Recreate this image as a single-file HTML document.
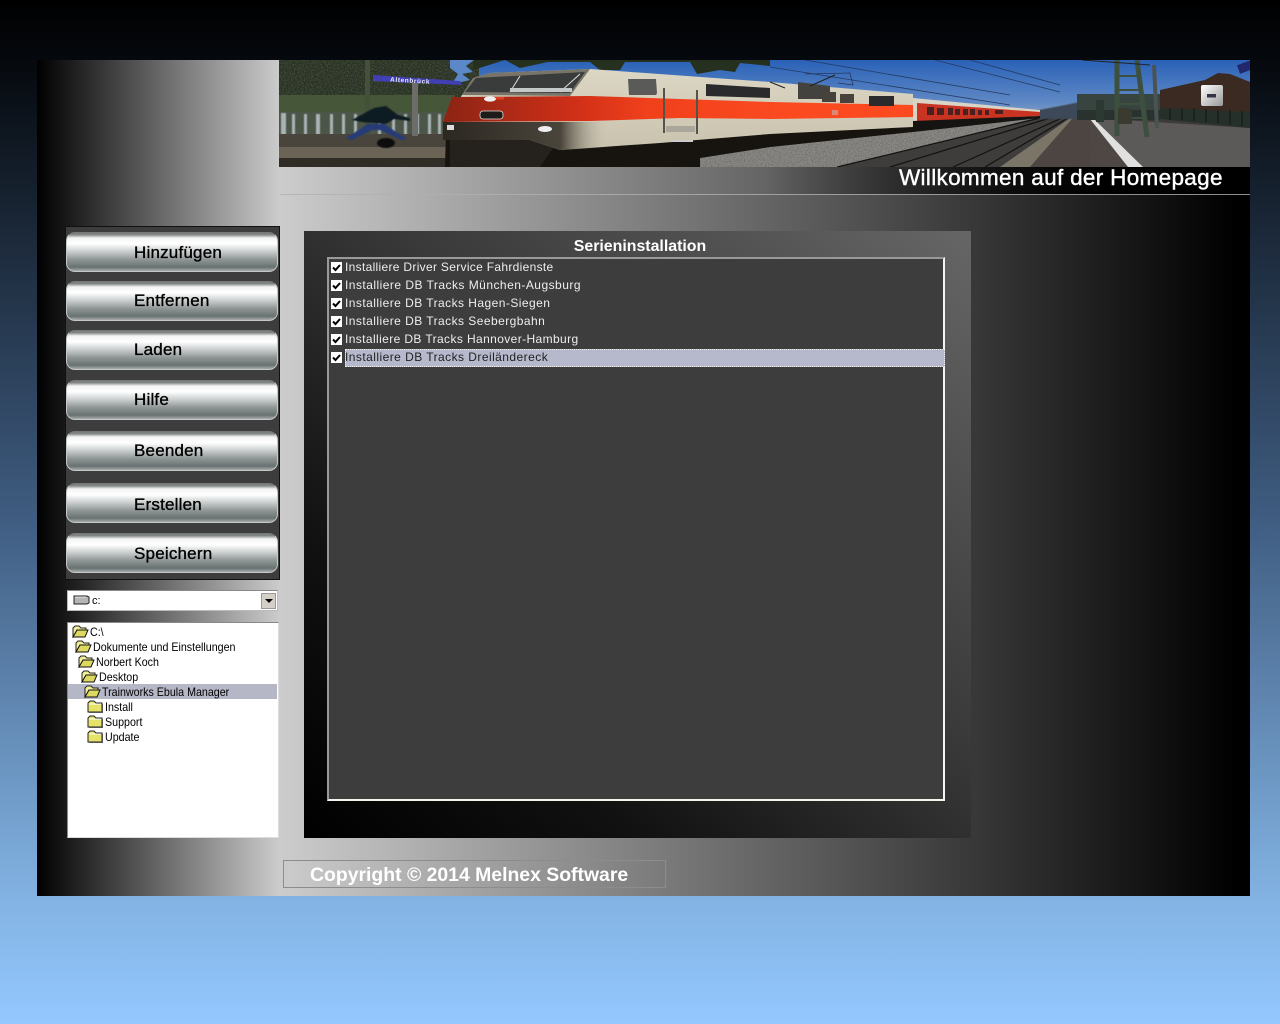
<!DOCTYPE html>
<html lang="de"><head><meta charset="utf-8"><title>Trainworks Ebula Manager</title>
<style>
html,body{margin:0;padding:0;width:1280px;height:1024px;overflow:hidden}
body{position:relative;background:linear-gradient(180deg,#000 0,#04070b 50px,#3e5b7f 512px,#82b2e2 896px,#94c8ff 1024px);font-family:"Liberation Sans",sans-serif}
.a{position:absolute}
#panel{left:37px;top:60px;width:1213px;height:836px;background:linear-gradient(90deg,#000 0,#ccc 243px,#000 1200px)}
#banner{left:0;top:0}
.btn{position:absolute;left:66px;width:212px;height:40px;box-sizing:border-box;border-radius:9px;border:1px solid #c4c8c8;border-top-color:#777;
background:linear-gradient(180deg,#7c8080 0,#7c8080 4%,#f4f4f4 13%,#fff 28%,#ccd0d0 48%,#8f9595 70%,#687272 90%,#a8acac 100%);color:#000;font-size:17px;line-height:37px;letter-spacing:.2px;-webkit-text-stroke:.35px #000}
.btn span{position:absolute;white-space:nowrap}
#side{left:65px;top:226px;width:215px;height:354px;box-sizing:border-box;background:#3d3d3d;border:1px solid #111}
#combo{left:67px;top:590px;width:211px;height:21px;box-sizing:border-box;background:#fff;border:1px solid #bbb;border-top-color:#888;font-size:11px;line-height:21px}
#arrow{position:absolute;right:1px;top:2px;width:15px;height:16px;background:#d4d0c8;border:1px solid #999;box-sizing:border-box}
#arrow:after{content:"";position:absolute;left:3px;top:5px;border:4px solid transparent;border-top:4px solid #000}
#tree{left:67px;top:622px;width:212px;height:216px;box-sizing:border-box;background:#fff;border:1px solid #ddd;border-top-color:#888;border-left-color:#888;font-size:12px;color:#000}
.r{position:absolute;left:0;right:1px;height:15px;line-height:16px;white-space:nowrap}
.r span{position:absolute;top:0;transform:scaleX(.89);transform-origin:0 50%}
.r svg{position:absolute;top:1px}
#main{left:304px;top:231px;width:667px;height:607px;background:linear-gradient(to top right,#000 0,#111 25%,#3a3a3a 58%,#666 100%)}
#ttl{left:304px;top:237px;width:672px;text-align:center;color:#fff;font-weight:bold;font-size:15.9px;line-height:19px}
#list{left:327px;top:257px;width:618px;height:544px;box-sizing:border-box;background:#3d3d3d;border:2px solid #fff;border-top-color:#999;border-left-color:#999;border-right-color:#f4f4f0;border-bottom-color:#f4f4ec}
.i{position:absolute;left:0;width:616px;height:18px;font-size:12px;line-height:16px;color:#eee;white-space:nowrap}
.i b{font-weight:normal;position:absolute;left:16px;top:0;right:0;height:18px}
.i.s b{background:#b6b9cc;color:#222;outline:1px dotted #eee;outline-offset:-1px}
.c{position:absolute;left:2px;top:3px;width:11px;height:11px;background:#fff}
.c svg{position:absolute;left:0;top:0}
#foot{left:283px;top:860px;width:383px;height:28px;box-sizing:border-box;border:1px solid #8c8c8c}
#foottxt{left:310px;top:863px;color:#fff;font-weight:bold;font-size:19.4px;line-height:25px;white-space:nowrap}
#wel{left:899px;top:165px;color:#fff;font-size:22.5px;line-height:26px;white-space:nowrap;-webkit-text-stroke:.4px #fff;letter-spacing:.32px}
</style></head><body>
<div class="a" id="panel"></div>

<svg class="a" id="banner" width="1280" height="200" viewBox="0 0 1280 200">
<defs>
<linearGradient id="sky" gradientUnits="userSpaceOnUse" x1="0" y1="60" x2="0" y2="120"><stop offset="0" stop-color="#2a62b8"/><stop offset=".7" stop-color="#5f88c4"/><stop offset="1" stop-color="#8fa7c8"/></linearGradient>
<linearGradient id="cream" x1="0" y1="0" x2="0" y2="1"><stop offset="0" stop-color="#dcd6c4"/><stop offset="1" stop-color="#c8c2ae"/></linearGradient>
<linearGradient id="nose" gradientUnits="userSpaceOnUse" x1="445" y1="0" x2="610" y2="0"><stop offset="0" stop-color="#2c2822"/><stop offset=".7" stop-color="#4a453b"/><stop offset="1" stop-color="#cfc9b6" stop-opacity="0"/></linearGradient>
<linearGradient id="red" gradientUnits="userSpaceOnUse" x1="445" y1="0" x2="780" y2="0"><stop offset="0" stop-color="#8c2414"/><stop offset=".4" stop-color="#d23018"/><stop offset=".6" stop-color="#f0401c"/><stop offset="1" stop-color="#fb4a20"/></linearGradient>
<linearGradient id="btng" x1="0" y1="0" x2="1" y2="1"><stop offset="0" stop-color="#fff"/><stop offset="1" stop-color="#999"/></linearGradient>
<linearGradient id="strip" gradientUnits="userSpaceOnUse" x1="279" y1="0" x2="1250" y2="0"><stop offset=".5" stop-color="#000" stop-opacity="0"/><stop offset=".85" stop-color="#000"/></linearGradient>
<filter id="b1"><feGaussianBlur stdDeviation=".5"/></filter>
<filter id="n" x="0" y="0" width="100%" height="100%"><feTurbulence type="fractalNoise" baseFrequency=".7" numOctaves="2" seed="3"/><feColorMatrix values="0 0 0 0 .1 0 0 0 0 .1 0 0 0 0 .1 1.6 0 0 0 -.6"/></filter>
<clipPath id="bc"><rect x="279" y="60" width="971" height="107"/></clipPath>
</defs>
<g clip-path="url(#bc)">
<rect x="279" y="60" width="971" height="107" fill="url(#sky)"/>
<!-- trees -->
<rect x="279" y="60" width="200" height="40" fill="#27321f"/>
<rect x="279" y="60" width="200" height="40" filter="url(#n)"/>
<path d="M473 60H770V66L740 63 735 72 720 70 697 74 690 62 625 62 620 70H600L590 62 548 62 520 68 505 60 473 70Z" fill="#26301f"/>
<path d="M450 60H474L466 66 473 72 462 74 470 80 452 84 458 74 450 68Z" fill="#5a88c8"/>
<path d="M279 95H455V118H279Z" fill="#465638"/>
<!-- fence -->
<rect x="279" y="112" width="175" height="24" fill="#4c5648"/>
<g fill="#a9b2b4" filter="url(#b1)"><rect x="281" y="113" width="5" height="22"/><rect x="292" y="114" width="3" height="21"/><rect x="304" y="114" width="3" height="21"/><rect x="316" y="114" width="4" height="21"/><rect x="330" y="114" width="3" height="21"/><rect x="342" y="114" width="3" height="21"/><rect x="354" y="114" width="3" height="21"/><rect x="366" y="114" width="3" height="21"/><rect x="378" y="114" width="3" height="21"/><rect x="392" y="114" width="3" height="21"/><rect x="404" y="114" width="3" height="21"/><rect x="416" y="114" width="3" height="21"/><rect x="428" y="114" width="3" height="21"/><rect x="438" y="114" width="3" height="21"/></g>
<rect x="279" y="134" width="180" height="33" fill="#4a453c"/>
<rect x="279" y="147" width="170" height="11" fill="#6a6356"/>
<rect x="279" y="158" width="170" height="9" fill="#302c26"/>
<!-- sign -->
<rect x="412" y="78" width="6" height="58" fill="#6c6c68"/>
<rect x="365" y="60" width="5" height="75" fill="#45503a"/>
<path d="M373 75 460 81 462 85 373 81Z" fill="#4040b4"/>
<text x="390" y="81.5" font-size="6.5" letter-spacing=".6" fill="#e8e8f0" font-weight="bold" font-family="Liberation Sans" transform="rotate(3.5 390 82)">Altenbrück</text>
<!-- person -->
<g filter="url(#b1)"><path d="M352 120 374 108 386 106 398 115 410 118V121L394 119 386 124 362 122Z" fill="#101a24"/><path d="M346 138 368 124 384 124 407 139 402 140 380 130 372 130 352 140Z" fill="#263a78"/><ellipse cx="386" cy="143" rx="9" ry="5" fill="#111"/></g>
<!-- ground base -->
<rect x="560" y="118" width="690" height="49" fill="#3a3836"/>
<!-- ballast -->
<path d="M700 158 770 147 910 132 1037 118 837 167H700Z" fill="#8a8985"/>
<path d="M700 158 770 147 910 132 1037 118 837 167H700Z" filter="url(#n)" opacity=".85"/>
<!-- tracks -->
<path d="M837 167 1037 118 1070 118 1000 167Z" fill="#3f3d3b"/>
<g stroke="#141210" stroke-width="1.2" fill="none"><path d="M837 167 1040 118"/><path d="M890 167 1050 118"/><path d="M953 167 1062 118"/><path d="M985 167 1068 118"/></g>
<path d="M1000 167 1070 118 1073 118 1030 167Z" fill="#7a7567"/>
<!-- platform -->
<path d="M1030 167 1073 118 1090 118 1142 167Z" fill="#4d4542"/>
<path d="M1090 118 1250 128V167H1142Z" fill="#5d5a58"/>
<path d="M1090 118 1250 128V167H1142Z" filter="url(#n)" opacity=".5"/>
<path d="M1090 119 1095 120 1143 167H1128Z" fill="#e0e0de"/>
<!-- distant hills / station -->
<path d="M1028 112 1060 106 1090 100 1100 112 1090 119H1040Z" fill="#3e4a58" filter="url(#b1)"/>
<path d="M1077 94H1160V120H1077Z" fill="#38443f"/>
<path d="M1077 110H1160V120H1077Z" fill="#2a3230"/>
<!-- building -->
<path d="M1160 90 1205 80 1218 73 1230 74 1250 82V128L1160 119Z" fill="#3a2a22"/>
<path d="M1160 108 1250 112V128L1160 119Z" fill="#26302a"/>
<g stroke="#181a16" stroke-width="1.2"><path d="M1170 108V120M1182 108V120M1194 108V121M1206 109V122M1218 110V123M1230 110V125M1242 111V126"/></g>
<rect x="1238" y="63" width="14" height="9" fill="#22266a" transform="rotate(-20 1244 67)"/>
<!-- gantry -->
<g fill="none" stroke="#3d5040"><path d="M1117 60V136" stroke-width="5"/><path d="M1137 60 1147 137" stroke-width="5"/><path d="M1117 76H1140M1117 90H1143M1117 104H1144M1117 118H1145" stroke-width="2"/></g>
<path d="M1154 65 1157 128" stroke="#4a5252" stroke-width="4" fill="none"/>
<path d="M1082 60 1150 65" stroke="#222" stroke-width="1" fill="none"/>
<path d="M1118 108H1132V124H1118Z" fill="#3a3a30"/>
<rect x="1096" y="100" width="8" height="22" fill="#2c3832"/>
<!-- catenary -->
<g stroke="#243a60" stroke-width=".8" fill="none"><path d="M770 67 1010 105"/><path d="M805 60 1010 95"/><path d="M935 60 1060 92"/><path d="M970 60 1060 85"/><path d="M805 74 850 73 853 85 838 83"/></g>
<!-- coaches -->
<path d="M913 98 1040 110V116L913 130Z" fill="#d8d4c6"/>
<path d="M917 103 1040 112V116L917 122Z" fill="#c93322"/>
<path d="M913 121 1040 116V118L913 132Z" fill="#161412"/>
<g fill="#4a2020"><rect x="927" y="107" width="7" height="8"/><rect x="937" y="108" width="7" height="7"/><rect x="948" y="108" width="5" height="7"/><rect x="955" y="109" width="5" height="6"/><rect x="963" y="109" width="5" height="6"/><rect x="970" y="109" width="5" height="6"/><rect x="978" y="110" width="4" height="5"/><rect x="985" y="110" width="4" height="5"/><rect x="995" y="110" width="8" height="4"/></g>
<!-- loco undercarriage -->
<path d="M446 130 560 130 770 128 913 124V132L770 147 700 158 700 167H445Z" fill="#17140f"/>
<path d="M450 140 560 138 540 167H450Z" fill="#25221e"/>
<!-- loco body -->
<path d="M462 95 473 78 490 73 590 69 770 82 913 94V127L770 134 660 143 560 150 530 140H443L447 122Z" fill="url(#cream)"/>
<path d="M443 122 610 122 610 147 560 150 530 140H443Z" fill="url(#nose)"/>
<path d="M452 97 590 96 770 102 913 105V117L770 119 680 118 590 121 443 122Z" fill="url(#red)"/>
<path d="M462 95 473 78 490 73 590 69 570 96Z" fill="#787468"/>
<path d="M465 92 476 78 585 72 570 93Z" fill="#3a3c3c"/>
<path d="M510 92 520 76M560 92 580 74" stroke="#ddd" stroke-width="1"/>
<rect x="510" y="88" width="62" height="4" fill="#c4c8c8"/>
<path d="M628 79h28l1 14-1 2h-27z" fill="#5a5a58"/>
<path d="M706 84 770 88 770 98 706 96Z" fill="#2a2a2c"/>
<path d="M798 82 830 86V99H798Z" fill="#44423e"/>
<path d="M822 92h14v10h-14zM840 94h14v9h-14z" fill="#48423c"/>
<path d="M869 96h25v10h-25z" fill="#2a2a2c"/>
<g stroke="#55524a" stroke-width="2" fill="none"><path d="M664 88V133"/><path d="M697 90V134"/></g>
<path d="M666 126H695V132H666Z" fill="#aaa79a"/>
<rect x="671" y="140" width="22" height="2" fill="#ccc"/>
<rect x="480" y="111" width="23" height="8" rx="3" fill="#1e1c18" stroke="#ddd" stroke-width=".8"/>
<ellipse cx="490" cy="99" rx="6" ry="2.6" fill="#eee"/>
<rect x="496" y="97" width="8" height="2.5" fill="#e04020"/>
<ellipse cx="545" cy="129" rx="7" ry="3" fill="#eee"/>
<rect x="447" y="125" width="7" height="5" fill="#ddd"/>
<rect x="832" y="110" width="6" height="5" fill="#d98a76"/>
<!-- panto -->
<path d="M785 88 770 82M810 86 835 75" stroke="#222" stroke-width="1"/>
<!-- white cube -->
<rect x="1201" y="85" width="22" height="21" rx="2" fill="url(#btng)"/>
<rect x="1207" y="94" width="9" height="3.5" fill="#334"/>
</g>
<rect x="279" y="167" width="971" height="27" fill="url(#strip)"/>
<rect x="280" y="194" width="970" height="1" fill="#b0b0b0" opacity=".8"/>
</svg>
<div class="a" id="wel">Willkommen auf der Homepage</div>

<div class="a" id="side"></div>
<div class="btn" style="top:232px"><span style="left:67px;top:1px">Hinzufügen</span></div>
<div class="btn" style="top:281px"><span style="left:67px;top:0">Entfernen</span></div>
<div class="btn" style="top:330px"><span style="left:67px;top:0">Laden</span></div>
<div class="btn" style="top:380px"><span style="left:67px;top:0">Hilfe</span></div>
<div class="btn" style="top:431px"><span style="left:67px;top:0">Beenden</span></div>
<div class="btn" style="top:483px"><span style="left:67px;top:2px">Erstellen</span></div>
<div class="btn" style="top:533px"><span style="left:67px;top:1px">Speichern</span></div>

<div class="a" id="combo">
<svg style="position:absolute;left:5px;top:3px" width="17" height="11"><path d="M1 2h13l2 1v6l-2 1H1z" fill="#b5b5b5" stroke="#222"/><path d="M2 3h11" stroke="#eee"/></svg>
<span style="position:absolute;left:24px;top:0">c:</span><div id="arrow"></div></div>

<svg width="0" height="0" style="position:absolute"><defs>
<symbol id="fo" viewBox="0 0 17 13"><path d="M1 3 3 1H7L9 3H14V5H5L1 12Z" fill="#f2ef9a" stroke="#222"/><path d="M1 12 5 5H16L13 12Z" fill="#dcd860" stroke="#111"/></symbol>
<symbol id="fc" viewBox="0 0 17 13"><path d="M1 3 3 1H7L9 3H15V12H1Z" fill="#e6e36a" stroke="#222"/><path d="M2 4H14" stroke="#fff"/><path d="M15.5 4V12.5H2" stroke="#555" fill="none"/></symbol>
</defs></svg>
<div class="a" id="tree">
<div class="r" style="top:1px"><svg style="left:4px" width="17" height="13"><use href="#fo"/></svg><span style="left:22px">C:\</span></div>
<div class="r" style="top:16px"><svg style="left:7px" width="17" height="13"><use href="#fo"/></svg><span style="left:25px">Dokumente und Einstellungen</span></div>
<div class="r" style="top:31px"><svg style="left:10px" width="17" height="13"><use href="#fo"/></svg><span style="left:28px">Norbert Koch</span></div>
<div class="r" style="top:46px"><svg style="left:13px" width="17" height="13"><use href="#fo"/></svg><span style="left:31px">Desktop</span></div>
<div class="r" style="top:61px;background:#b5b6c6"><svg style="left:16px" width="17" height="13"><use href="#fo"/></svg><span style="left:34px">Trainworks Ebula Manager</span></div>
<div class="r" style="top:76px"><svg style="left:19px" width="17" height="13"><use href="#fc"/></svg><span style="left:37px">Install</span></div>
<div class="r" style="top:91px"><svg style="left:19px" width="17" height="13"><use href="#fc"/></svg><span style="left:37px">Support</span></div>
<div class="r" style="top:106px"><svg style="left:19px" width="17" height="13"><use href="#fc"/></svg><span style="left:37px">Update</span></div>
</div>

<div class="a" id="main"></div>
<div class="a" id="ttl">Serieninstallation</div>
<div class="a" id="list">
<div class="i" style="top:0;letter-spacing:.31px"><div class="c"><svg width="11" height="11"><path d="M2 5.5 4.5 8 9 3" stroke="#000" stroke-width="2" fill="none"/></svg></div><b>Installiere Driver Service Fahrdienste</b></div>
<div class="i" style="top:18px;letter-spacing:.47px"><div class="c"><svg width="11" height="11"><path d="M2 5.5 4.5 8 9 3" stroke="#000" stroke-width="2" fill="none"/></svg></div><b>Installiere DB Tracks München-Augsburg</b></div>
<div class="i" style="top:36px;letter-spacing:.45px"><div class="c"><svg width="11" height="11"><path d="M2 5.5 4.5 8 9 3" stroke="#000" stroke-width="2" fill="none"/></svg></div><b>Installiere DB Tracks Hagen-Siegen</b></div>
<div class="i" style="top:54px;letter-spacing:.45px"><div class="c"><svg width="11" height="11"><path d="M2 5.5 4.5 8 9 3" stroke="#000" stroke-width="2" fill="none"/></svg></div><b>Installiere DB Tracks Seebergbahn</b></div>
<div class="i" style="top:72px;letter-spacing:.39px"><div class="c"><svg width="11" height="11"><path d="M2 5.5 4.5 8 9 3" stroke="#000" stroke-width="2" fill="none"/></svg></div><b>Installiere DB Tracks Hannover-Hamburg</b></div>
<div class="i s" style="top:90px;letter-spacing:.45px"><div class="c"><svg width="11" height="11"><path d="M2 5.5 4.5 8 9 3" stroke="#000" stroke-width="2" fill="none"/></svg></div><b>Installiere DB Tracks Dreiländereck</b></div>
</div>

<div class="a" id="foot"></div>
<div class="a" id="foottxt">Copyright © 2014 Melnex Software</div>
</body></html>
